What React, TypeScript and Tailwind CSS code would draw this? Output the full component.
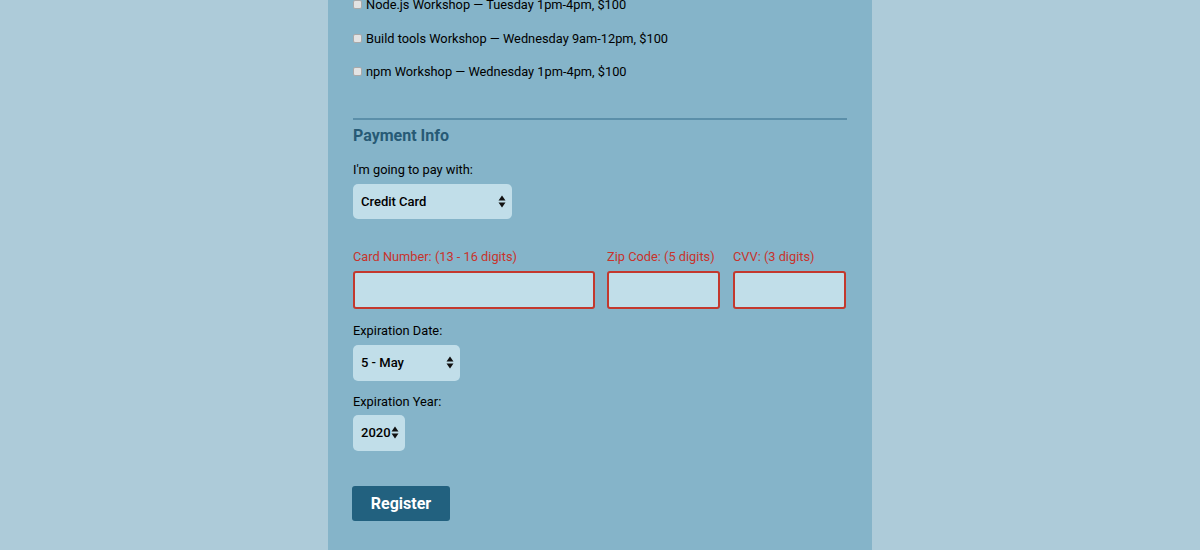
import { ReactNode } from "react";

const workshops = [
    "Node.js Workshop — Tuesday 1pm-4pm, $100",
    "Build tools Workshop — Wednesday 9am-12pm, $100",
    "npm Workshop — Wednesday 1pm-4pm, $100",
];

function Arrows() {
    return (
        <svg width="8" height="13" viewBox="0 0 8 13" className="pointer-events-none">
            <path d="M4 0.5 L7.5 5.5 L0.5 5.5 Z" fill="#111" />
            <path d="M4 12.5 L7.5 7.5 L0.5 7.5 Z" fill="#111" />
        </svg>
    );
}

function FakeSelect({ value, width, height }: { value: string; width: string; height: string }) {
    return (
        <div className={`relative ${width} ${height} bg-[#c1dee9] rounded-[5px] flex items-center pl-2 pr-[6px] pt-[1px]`}>
            <span className="flex-1 text-[13px] font-medium text-black">{value}</span>
            <div className="-mt-[1px]"><Arrows /></div>
        </div>
    );
}

function Label({ children, className = "" }: { children: ReactNode; className?: string }) {
    return <div className={`text-[12.8px] leading-4 ${className}`}>{children}</div>;
}

export default function App() {
    return (
        <div className="min-h-[550px] h-[550px] overflow-hidden bg-[#adcbd9] flex justify-center font-['Roboto',sans-serif] text-black">
            <div className="w-[544px] bg-[#85b4c9] px-[25px]">
                <div className="-mt-[12px]">
                    {workshops.map((w) => (
                        <label key={w} className="h-[33.5px] flex items-center gap-[4px] text-[12.8px]">
                            <span className="w-[9px] h-[9px] bg-[#e3e3e3] border border-[#a9a9a9] rounded-[2px]" />
                            <span>{w}</span>
                        </label>
                    ))}
                </div>

                <div className="mt-[29px] h-[2px] bg-[#5b8fa9]" />

                <h2 className="mt-[6px] text-[16px] leading-5 font-bold text-[#275a75]">Payment Info</h2>

                <Label className="mt-[16px]">I'm going to pay with:</Label>
                <div className="mt-[6px]">
                    <FakeSelect value="Credit Card" width="w-[159px]" height="h-[35px]" />
                </div>

                <div className="mt-[30px] flex gap-[12px]">
                    <div className="w-[242px]">
                        <Label className="text-[#c8332c]">Card Number: (13 - 16 digits)</Label>
                        <input className="mt-[6px] w-full h-[38px] bg-[#c1dee9] border-2 border-[#c3382d] rounded-[3px] outline-none" />
                    </div>
                    <div className="w-[113px]">
                        <Label className="text-[#c8332c]">Zip Code: (5 digits)</Label>
                        <input className="mt-[6px] w-full h-[38px] bg-[#c1dee9] border-2 border-[#c3382d] rounded-[3px] outline-none" />
                    </div>
                    <div className="w-[113px] ml-[1px]">
                        <Label className="text-[#c8332c]">CVV: (3 digits)</Label>
                        <input className="mt-[6px] w-full h-[38px] bg-[#c1dee9] border-2 border-[#c3382d] rounded-[3px] outline-none" />
                    </div>
                </div>

                <Label className="mt-[14px]">Expiration Date:</Label>
                <div className="mt-[6px]">
                    <FakeSelect value="5 - May" width="w-[107px]" height="h-[36px]" />
                </div>

                <Label className="mt-[13px]">Expiration Year:</Label>
                <div className="mt-[5px]">
                    <FakeSelect value="2020" width="w-[52px]" height="h-[36px]" />
                </div>

                <button className="mt-[35px] -ml-[1px] w-[98px] h-[35px] pt-[2px] bg-[#22617f] rounded-[3px] text-white text-[16px] font-bold">
                    Register
                </button>
            </div>
        </div>
    );
}
